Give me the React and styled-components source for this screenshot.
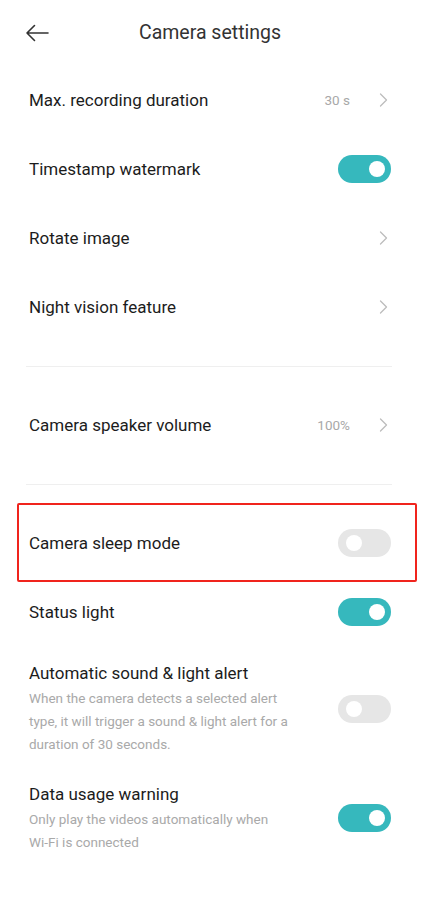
import React from 'react';
import styled, { createGlobalStyle } from 'styled-components';

const GlobalStyle = createGlobalStyle`
  * { box-sizing: border-box; }
  body {
    margin: 0;
    background: #fff;
    font-family: Roboto, "Noto Sans", "Liberation Sans", sans-serif;
    -webkit-font-smoothing: antialiased;
  }
`;

function BackArrow() {
  return (
    <svg width="24" height="18" viewBox="0 0 24 18" fill="none">
      <path d="M23 9H2M9.5 1.5L2 9l7.5 7.5" stroke="#333" strokeWidth="1.6" strokeLinecap="round" strokeLinejoin="round" />
    </svg>
  );
}

function Chevron() {
  return (
    <svg width="9" height="14" viewBox="0 0 9 14" fill="none">
      <path d="M1.5 1l6 6-6 6" stroke="#bdbdbd" strokeWidth="1.3" strokeLinecap="round" strokeLinejoin="round" />
    </svg>
  );
}

function Toggle({ on }) {
  return (
    <Switch $on={on}>
      <Knob $on={on} />
    </Switch>
  );
}

const settings = [
  { title: 'Max. recording duration', value: '30 s', type: 'link' },
  { title: 'Timestamp watermark', type: 'toggle', on: true },
  { title: 'Rotate image', type: 'link' },
  { title: 'Night vision feature', type: 'link' },
];

export default function App() {
  return (
    <Page>
      <GlobalStyle />
      <Header>
        <BackButton>
          <BackArrow />
        </BackButton>
        <Title>Camera settings</Title>
      </Header>

      {settings.map((s) => (
        <Row key={s.title}>
          <Label>{s.title}</Label>
          {s.type === 'toggle' ? (
            <Toggle on={s.on} />
          ) : (
            <Trailing>
              {s.value && <Value>{s.value}</Value>}
              <Chevron />
            </Trailing>
          )}
        </Row>
      ))}

      <Divider />
      <Row>
        <Label>Camera speaker volume</Label>
        <Trailing>
          <Value>100%</Value>
          <Chevron />
        </Trailing>
      </Row>
      <Divider />

      <Highlight>
        <Label>Camera sleep mode</Label>
        <Toggle on={false} />
      </Highlight>

      <Row $height={60}>
        <Label>Status light</Label>
        <Toggle on />
      </Row>

      <DescRow $top={19} $bottom={12}>
        <TextBlock>
          <Label>Automatic sound &amp; light alert</Label>
          <Desc>
            When the camera detects a selected alert type, it will trigger a sound &amp; light alert for a duration of 30 seconds.
          </Desc>
        </TextBlock>
        <Toggle on={false} />
      </DescRow>

      <DescRow $top={14} $bottom={14}>
        <TextBlock>
          <Label>Data usage warning</Label>
          <Desc>
            Only play the videos automatically when <NoWrap>Wi-Fi</NoWrap> is connected
          </Desc>
        </TextBlock>
        <Toggle on />
      </DescRow>
    </Page>
  );
}

const Page = styled.div`
  width: 438px;
  min-height: 907px;
  background: #fff;
  display: flex;
  flex-direction: column;
`;

const Header = styled.div`
  height: 65px;
  display: flex;
  align-items: center;
  justify-content: center;
  position: relative;
`;

const BackButton = styled.div`
  position: absolute;
  left: 25px;
  top: 24px;
  display: flex;
`;

const Title = styled.div`
  font-size: 19.5px;
  color: #333;
  margin-right: 18px;
`;

const Row = styled.div`
  height: ${({ $height }) => $height || 69}px;
  padding: 0 47px 0 29px;
  display: flex;
  align-items: center;
  justify-content: space-between;
`;

const Label = styled.div`
  font-size: 17px;
  color: #1c1c1c;
  line-height: 24px;
`;

const Trailing = styled.div`
  display: flex;
  align-items: center;
  gap: 29px;
  margin-right: 3px;
`;

const Value = styled.span`
  font-size: 13.5px;
  color: #a8a8a8;
`;

const Divider = styled.div`
  height: 1px;
  background: #efefef;
  margin: 25px 46px 0 26px;
  & + ${Row} {
    margin-top: 23px;
  }
`;

const Highlight = styled.div`
  height: 79px;
  margin: 18px 21px 0 17px;
  padding: 0 24px 0 10px;
  border: 2px solid #f0241d;
  border-radius: 2px;
  display: flex;
  align-items: center;
  justify-content: space-between;
`;

const DescRow = styled.div`
  padding: ${({ $top }) => $top}px 47px ${({ $bottom }) => $bottom}px 29px;
  display: flex;
  align-items: center;
  justify-content: space-between;
`;

const TextBlock = styled.div`
  display: flex;
  flex-direction: column;
`;

const Desc = styled.div`
  width: 272px;
  margin-top: 2px;
  font-size: 13.5px;
  line-height: 23px;
  color: #a9a9a9;
`;

const NoWrap = styled.span`
  white-space: nowrap;
`;

const Switch = styled.div`
  width: 53px;
  height: 28px;
  flex-shrink: 0;
  border-radius: 14px;
  background: ${({ $on }) => ($on ? '#36b8bd' : '#e6e6e6')};
  position: relative;
`;

const Knob = styled.div`
  position: absolute;
  top: 6px;
  left: ${({ $on }) => ($on ? '31px' : '8px')};
  width: 16px;
  height: 16px;
  border-radius: 50%;
  background: #fff;
`;
